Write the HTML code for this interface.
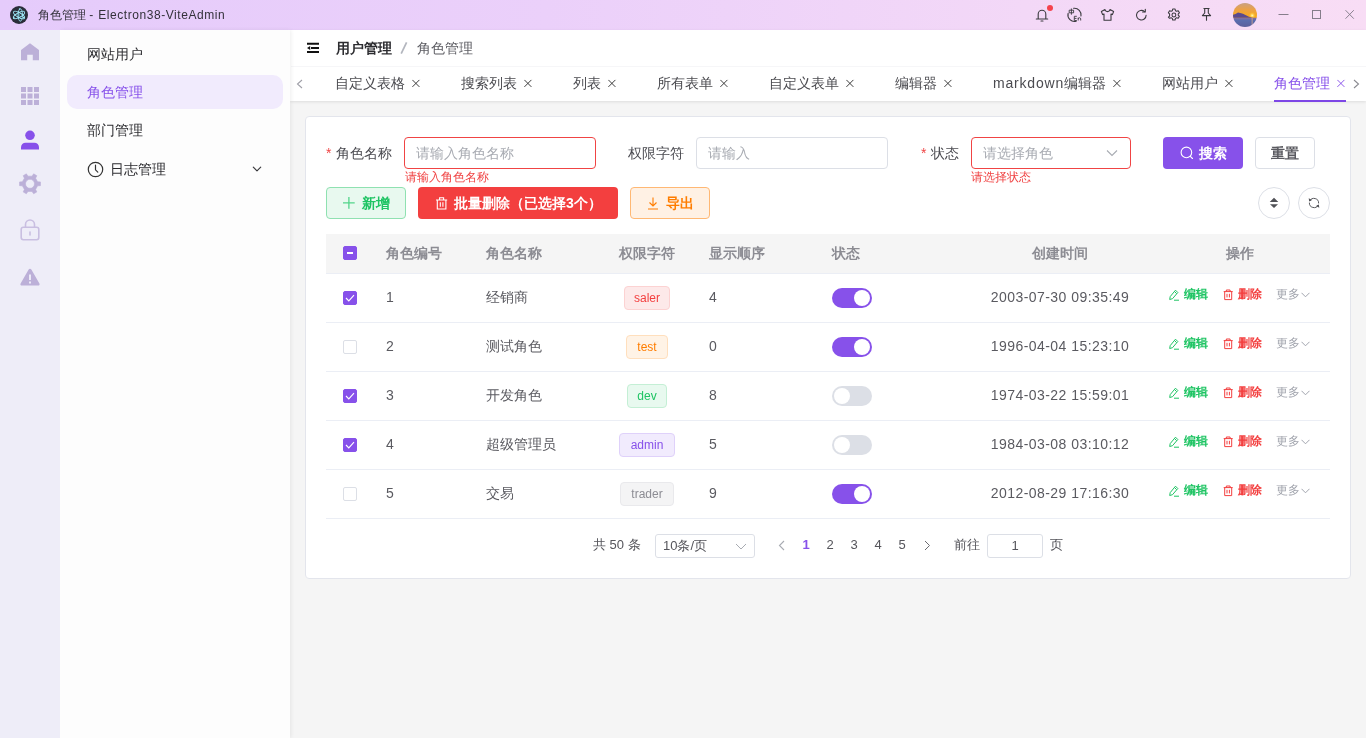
<!DOCTYPE html>
<html lang="zh">
<head>
<meta charset="utf-8">
<title>角色管理 - Electron38-ViteAdmin</title>
<style>
*{box-sizing:border-box;margin:0;padding:0}
html,body{width:1366px;height:738px;overflow:hidden}
body{font-family:"Liberation Sans",sans-serif;font-size:14px;color:#303133;background:#f5f5f5;position:relative}
#wrap{position:absolute;left:0;top:0;width:1366px;height:738px;will-change:transform}
.abs{position:absolute}
svg{display:block}
/* title bar */
#titlebar{position:absolute;left:0;top:0;width:1366px;height:30px;background:linear-gradient(90deg,#e5cbfb 0%,#ebd0fa 40%,#f3d8f7 75%,#f8ddf5 100%)}
#titlebar .title{position:absolute;left:38px;top:0;line-height:31px;font-size:12px;color:#33313a;white-space:nowrap}
#logo{position:absolute;left:10px;top:6px;width:18px;height:18px;border-radius:50%;background:#2b2e3a}
.tbi{position:absolute;top:7px;width:16px;height:16px}
/* icon rail */
#rail{position:absolute;left:0;top:30px;width:60px;height:708px;background:#eeedf8;z-index:4}
.ri{position:absolute;left:18px;width:24px;height:24px}
/* menu */
#menu{position:absolute;left:60px;top:30px;width:230px;height:708px;background:#fdfdfd;box-shadow:1px 0 4px rgba(0,0,0,.07);z-index:3}
.mi{position:absolute;left:7px;width:216px;height:34px;line-height:34px;padding-left:20px;font-size:14px;color:#2c2c30;border-radius:10px;white-space:nowrap}
.mi.on{background:#f1ebfd;color:#8751ea}
/* header */
#header{position:absolute;left:290px;top:30px;width:1076px;height:71px;background:#fff;box-shadow:0 1px 3px rgba(0,0,0,.10)}
#crumb{position:absolute;left:1px;top:0;width:1075px;height:36px;line-height:36px}
#crumb span{position:absolute;top:0;white-space:nowrap}
#tabs{position:absolute;left:1px;top:36px;width:1075px;height:35px;border-top:1px solid #f6f6f8}
.tab{position:absolute;top:-1px;height:35px;line-height:35px;font-size:14px;color:#4b4b50;white-space:nowrap}
.tab i{position:absolute;top:12px;width:10px;height:10px}
.tab.on{color:#8751ea}
/* card */
#card{position:absolute;left:305px;top:116px;width:1046px;height:463px;background:#fff;border:1px solid #e3e5ec;border-radius:4px}
.lbl{position:absolute;top:137px;height:32px;line-height:32px;font-size:14px;color:#4a4a50;white-space:nowrap}
.lbl b{color:#f04444;font-weight:normal;margin-right:5px}
.inp{position:absolute;top:137px;height:32px;line-height:30px;border:1px solid #dcdfe6;border-radius:4px;background:#fff;padding-left:11px;font-size:14px;color:#a8abb2;white-space:nowrap}
.inp.err{border-color:#f04444}
.errt{position:absolute;top:169px;line-height:16px;font-size:12px;color:#f04444;white-space:nowrap}
.btn{position:absolute;height:32px;line-height:30px;border-radius:4px;font-size:14px;font-weight:bold;white-space:nowrap;border:1px solid transparent}
.btn svg{position:absolute}
.btn span{position:absolute;top:0}
/* table */
#thead{position:absolute;left:326px;top:234px;width:1004px;height:40px;background:#f5f5f5;border-bottom:1px solid #ebeef5}
.th{position:absolute;top:234px;height:39px;line-height:39px;font-weight:bold;color:#8c8c93;font-size:14px;white-space:nowrap}
.row{position:absolute;left:326px;width:1004px;height:49px;border-bottom:1px solid #ebeef5}
.row>*{position:absolute}
.c{top:0;line-height:46px;font-size:14px;color:#5a5a60;white-space:nowrap}
.cb{left:17px;top:17px;width:14px;height:14px;border:1px solid #dcdfe6;border-radius:2px;background:#fff}
.cb.on{background:#8751ea;border-color:#8751ea}
.tag{top:12px;height:24px;line-height:22px;border:1px solid;border-radius:4px;font-size:12px;text-align:center;white-space:nowrap}
.sw{left:506px;top:14px;width:40px;height:20px;border-radius:10px;background:#dcdfe6}
.sw::after{content:"";position:absolute;left:2px;top:2px;width:16px;height:16px;border-radius:50%;background:#fff}
.sw.on{background:#8751ea}
.sw.on::after{left:22px}
.op{top:0;line-height:41px;font-size:12px;white-space:nowrap;font-weight:bold}
.op svg{position:absolute}
/* pagination */
.pg{position:absolute;top:533px;height:24px;line-height:24px;font-size:13px;color:#55555b;white-space:nowrap}
</style>
</head>
<body>
<div id="wrap">
<div id="titlebar">
<div id="logo"><svg width="18" height="18" viewBox="0 0 18 18"><g fill="none" stroke="#9feaf9" stroke-width="0.900"><ellipse cx="9" cy="9" rx="6.300" ry="2.300" transform="rotate(-30 9 9)"/><ellipse cx="9" cy="9" rx="6.300" ry="2.300" transform="rotate(30 9 9)"/><ellipse cx="10.300" cy="9" rx="2.200" ry="6.200"/></g><circle cx="8.700" cy="9" r="1" fill="#6fb6c4"/><circle cx="3.800" cy="11.800" r="0.900" fill="#9feaf9"/><circle cx="13.800" cy="11.600" r="0.900" fill="#9feaf9"/><circle cx="9.600" cy="3" r="0.800" fill="#9feaf9"/></svg></div>
<div class="title">角色管理 - <span style="letter-spacing:0.560px;margin-left:1.500px">Electron38-ViteAdmin</span></div>
<svg class="tbi" style="left:1034px" viewBox="0 0 16 16"><path d="M2.300 12h11.400M4.200 12V7a3.800 3.800 0 0 1 7.600 0v5M7 14h2" fill="none" stroke="#3a3a3e" stroke-width="1.100" stroke-linecap="round" stroke-linejoin="round"/></svg>
<div class="abs" style="left:1047px;top:5px;width:6px;height:6px;border-radius:50%;background:#f5424d"></div>
<svg class="tbi" style="left:1066px;top:6px;width:17px;height:17px" viewBox="0 0 17 17"><path d="M7.600 2.300A6.600 6.600 0 0 1 15 10M10.200 15.200A6.600 6.600 0 0 1 2.100 7.300" fill="none" stroke="#3a3a3e" stroke-width="1.100" stroke-linecap="round"/><path d="M3.200 4.200h4.400v2.600H3.200zM5.400 2.500v6.200" fill="none" stroke="#3a3a3e" stroke-width="0.900"/><path d="M10.800 10.300H8.300v4.200h2.500M8.300 12.400h2.200M12.200 11.700v2.800M12.200 12.800c0-1.400 2.500-1.400 2.500 0v1.700" fill="none" stroke="#3a3a3e" stroke-width="0.900"/></svg>
<svg class="tbi" style="left:1099px" viewBox="0 0 16 16"><path d="M6 2.600L2.400 4.600l1.200 3L5 7v6.200h7V7l1.400.6 1.200-3L11 2.600C10.600 4 9.700 4.600 8.500 4.600S6.400 4 6 2.600z" fill="none" stroke="#3a3a3e" stroke-width="1.100" stroke-linejoin="round"/></svg>
<svg class="tbi" style="left:1133px" viewBox="0 0 16 16"><path d="M13.100 8.200a4.800 4.800 0 1 1-1.600-3.600" fill="none" stroke="#3a3a3e" stroke-width="1.100" stroke-linecap="round"/><path d="M12.300 2.300v2.700H9.600" fill="none" stroke="#3a3a3e" stroke-width="1.100" stroke-linecap="round" stroke-linejoin="round"/></svg>
<svg class="tbi" style="left:1166px" viewBox="0 0 16 16"><g transform="translate(7.900 8) scale(0.92) translate(-8 -8)"><path d="M6.700 1.500h2.600l.4 1.800 1.300.7 1.700-.6 1.300 2.200-1.300 1.200v1.400l1.300 1.200-1.300 2.200-1.700-.6-1.300.7-.4 1.800H6.700l-.4-1.800-1.300-.7-1.700.6L2 10.400l1.300-1.200V6.800L2 5.600l1.300-2.200 1.700.6 1.300-.7z" fill="none" stroke="#3a3a3e" stroke-width="1.150" stroke-linejoin="round"/><circle cx="8" cy="8" r="2.100" fill="none" stroke="#3a3a3e" stroke-width="1.150"/></g></svg>
<svg class="tbi" style="left:1199px;top:6px" viewBox="0 0 16 16"><path d="M4.900 2.500h5.200M5.700 2.500v4.500L3.400 9.600h8.200L9.300 7V2.500M7.500 9.600v4.700" fill="none" stroke="#3a3a3e" stroke-width="1.100" stroke-linecap="round" stroke-linejoin="round"/></svg>
<svg class="abs" id="avatar" style="left:1233px;top:3px" width="24" height="24" viewBox="0 0 24 24"><defs><clipPath id="avc"><circle cx="12" cy="12" r="12"/></clipPath><linearGradient id="sky" x1="0" y1="0" x2="0" y2="1"><stop offset="0" stop-color="#c9a184"/><stop offset="0.45" stop-color="#eca145"/><stop offset="1" stop-color="#fbab14"/></linearGradient><linearGradient id="sea" x1="0" y1="0" x2="0" y2="1"><stop offset="0" stop-color="#8a6f9c"/><stop offset="0.3" stop-color="#5a6cae"/><stop offset="1" stop-color="#5b5f9c"/></linearGradient><radialGradient id="sun" cx="0.5" cy="0.5" r="0.5"><stop offset="0" stop-color="#fff6c8"/><stop offset="0.35" stop-color="#ffd75a"/><stop offset="1" stop-color="#ffb21e" stop-opacity="0"/></radialGradient></defs><g clip-path="url(#avc)"><rect width="24" height="15" fill="url(#sky)"/><circle cx="19.200" cy="12.500" r="3.500" fill="url(#sun)"/><rect y="14.700" width="24" height="9.300" fill="url(#sea)"/><path d="M0 11.800l2.500-.8 2.500-1.400 2.200.4 2.800.8 3 1.400 3 1.600 4 .9H0z" fill="#5b4a8e"/><rect x="18.400" y="14.800" width="1.600" height="7" fill="#e8b08a" opacity="0.450"/></g></svg>
<svg class="abs" style="left:1278px;top:9px" width="12" height="12" viewBox="0 0 12 12"><path d="M0.500 5.500h10" stroke="#857d8b" stroke-width="1" fill="none"/></svg>
<svg class="abs" style="left:1311px;top:9px" width="12" height="12" viewBox="0 0 12 12"><rect x="1.500" y="1.500" width="8" height="8" stroke="#857d8b" stroke-width="1" fill="none"/></svg>
<svg class="abs" style="left:1344px;top:9px" width="12" height="12" viewBox="0 0 12 12"><path d="M1.500 1.200l8.300 8.500M9.800 1.200l-8.300 8.500" stroke="#857d8b" stroke-width="0.950" fill="none"/></svg>
</div>
<div id="rail">
<svg class="ri" style="top:10px" viewBox="0 0 24 24"><path d="M12 3.200L3 10v10.300h6.200v-5.600h5.600v5.600H21V10z" fill="#bcb0d8"/></svg>
<svg class="ri" style="top:54px" viewBox="0 0 24 24"><g fill="#bcb0d8"><rect x="3" y="3" width="5" height="5"/><rect x="9.500" y="3" width="5" height="5"/><rect x="16" y="3" width="5" height="5"/><rect x="3" y="9.500" width="5" height="5"/><rect x="9.500" y="9.500" width="5" height="5"/><rect x="16" y="9.500" width="5" height="5"/><rect x="3" y="16" width="5" height="5"/><rect x="9.500" y="16" width="5" height="5"/><rect x="16" y="16" width="5" height="5"/></g></svg>
<svg class="ri" style="top:98px" viewBox="0 0 24 24"><circle cx="12" cy="7.300" r="4.800" fill="#8751ea"/><path d="M3 21.500v-2.200c0-2.600 2-4.600 4.600-4.600h8.800c2.600 0 4.600 2 4.600 4.600v2.200z" fill="#8751ea"/></svg>
<svg class="ri" style="top:142px" viewBox="0 0 24 24"><path fill-rule="evenodd" d="M19.63 9.76 L22.44 9.96 L22.44 13.64 L19.63 13.84 L17.59 17.39 L18.81 19.92 L15.63 21.76 L14.04 19.43 L9.96 19.43 L8.37 21.76 L5.19 19.92 L6.41 17.39 L4.37 13.84 L1.56 13.64 L1.56 9.96 L4.37 9.76 L6.41 6.21 L5.19 3.68 L8.37 1.84 L9.96 4.17 L14.04 4.17 L15.63 1.84 L18.81 3.68 L17.59 6.21z M12 7.300a4.500 4.500 0 1 0 0 9 4.500 4.500 0 0 0 0-9z" fill="#bcb0d8" stroke="#bcb0d8" stroke-width="0.600" stroke-linejoin="round"/></svg>
<svg class="ri" style="top:188px" viewBox="0 0 24 24"><rect x="3.200" y="9.300" width="17.600" height="12.400" rx="2.200" fill="none" stroke="#c9bfe1" stroke-width="1.600"/><path d="M7.500 9.300V6.500a4.500 4.500 0 0 1 9 0v2.800" fill="none" stroke="#c9bfe1" stroke-width="1.600"/><path d="M12 14v3" stroke="#c9bfe1" stroke-width="1.600" stroke-linecap="round"/></svg>
<svg class="ri" style="top:235px" viewBox="-0.500 -0.700 25 25"><path fill-rule="evenodd" d="M12 3.300c.6 0 1.100.3 1.400.8l8.400 14.400c.6 1-.1 2.200-1.300 2.200h-17c-1.200 0-1.900-1.200-1.300-2.200L10.600 4.100c.3-.5.800-.8 1.400-.8zM11 9.300v5.600h2V9.300zm0 7.200v2h2v-2z" fill="#bcb0d8"/></svg>
</div>
<div id="menu">
<div class="mi" style="top:7px">网站用户</div>
<div class="mi on" style="top:45px">角色管理</div>
<div class="mi" style="top:83px">部门管理</div>
<div class="mi" style="top:122px;padding-left:43px">日志管理
<svg class="abs" style="left:20px;top:9px" width="17" height="17" viewBox="0 0 17 17"><circle cx="8.500" cy="8.500" r="7.200" fill="none" stroke="#333" stroke-width="1.200"/><path d="M8.500 4.200v4.600l2.300 2.300" fill="none" stroke="#333" stroke-width="1.200" stroke-linecap="round"/></svg>
<svg class="abs" style="left:184px;top:12px" width="12" height="10" viewBox="0 0 12 10"><path d="M2.300 3.200l3.700 3.700 3.700-3.700" fill="none" stroke="#3a3a3e" stroke-width="1.150" stroke-linecap="round" stroke-linejoin="round"/></svg>
</div>
</div>
<div id="header">
<div id="crumb">
<svg class="abs" style="left:16px;top:12px" width="13" height="12" viewBox="0 0 13 12"><path d="M0 1.800h12M4 5.900h8M0 10h12" stroke="#111" stroke-width="2" fill="none"/><path d="M3.200 3.900L0 5.900l3.200 2z" fill="#111"/></svg>
<span style="left:45px;font-weight:bold;color:#2c2c30">用户管理</span>
<svg class="abs" style="left:108px;top:11px" width="10" height="14" viewBox="0 0 10 14"><path d="M7.600 1.300L2.200 12.700" stroke="#b3b6be" stroke-width="1.700" fill="none"/></svg>
<span style="left:126px;color:#5c5c62">角色管理</span>
</div>
<div id="tabs">
<svg class="abs" style="left:5px;top:12px" width="8" height="10" viewBox="0 0 8 10"><path d="M6 1L1.500 5 6 9" fill="none" stroke="#a0a0a8" stroke-width="1.100"/></svg>
<div class="tab" style="left:44px">自定义表格<svg class="abs" style="left:77px;top:13px" width="9" height="9" viewBox="0 0 9 9"><path d="M0.400 0.900l7 7M7.400 0.900l-7 7" stroke="#333" stroke-width="0.950" fill="none"/></svg></div>
<div class="tab" style="left:170px">搜索列表<svg class="abs" style="left:63px;top:13px" width="9" height="9" viewBox="0 0 9 9"><path d="M0.400 0.900l7 7M7.400 0.900l-7 7" stroke="#333" stroke-width="0.950" fill="none"/></svg></div>
<div class="tab" style="left:282px">列表<svg class="abs" style="left:35px;top:13px" width="9" height="9" viewBox="0 0 9 9"><path d="M0.400 0.900l7 7M7.400 0.900l-7 7" stroke="#333" stroke-width="0.950" fill="none"/></svg></div>
<div class="tab" style="left:366px">所有表单<svg class="abs" style="left:63px;top:13px" width="9" height="9" viewBox="0 0 9 9"><path d="M0.400 0.900l7 7M7.400 0.900l-7 7" stroke="#333" stroke-width="0.950" fill="none"/></svg></div>
<div class="tab" style="left:478px">自定义表单<svg class="abs" style="left:77px;top:13px" width="9" height="9" viewBox="0 0 9 9"><path d="M0.400 0.900l7 7M7.400 0.900l-7 7" stroke="#333" stroke-width="0.950" fill="none"/></svg></div>
<div class="tab" style="left:604px">编辑器<svg class="abs" style="left:49px;top:13px" width="9" height="9" viewBox="0 0 9 9"><path d="M0.400 0.900l7 7M7.400 0.900l-7 7" stroke="#333" stroke-width="0.950" fill="none"/></svg></div>
<div class="tab" style="left:702px"><span style="letter-spacing:0.8px">markdown</span>编辑器<svg class="abs" style="left:120px;top:13px" width="9" height="9" viewBox="0 0 9 9"><path d="M0.400 0.900l7 7M7.400 0.900l-7 7" stroke="#333" stroke-width="0.950" fill="none"/></svg></div>
<div class="tab" style="left:871px">网站用户<svg class="abs" style="left:63px;top:13px" width="9" height="9" viewBox="0 0 9 9"><path d="M0.400 0.900l7 7M7.400 0.900l-7 7" stroke="#333" stroke-width="0.950" fill="none"/></svg></div>
<div class="tab on" style="left:983px">角色管理<svg class="abs" style="left:63px;top:13px" width="9" height="9" viewBox="0 0 9 9"><path d="M0.400 0.900l7 7M7.400 0.900l-7 7" stroke="#8751ea" stroke-width="0.950" fill="none"/></svg></div>
<div class="abs" style="left:983px;top:33px;width:72px;height:2px;background:#7d47e6;z-index:2"></div>
<svg class="abs" style="left:1061px;top:12px" width="8" height="10" viewBox="0 0 8 10"><path d="M2 1l4.500 4L2 9" fill="none" stroke="#8a8a90" stroke-width="1.100"/></svg>
</div>
</div>
<div id="card"></div>
<div class="lbl" style="left:326px"><b>*</b>角色名称</div>
<div class="inp err" style="left:404px;width:192px">请输入角色名称</div>
<div class="errt" style="left:405px">请输入角色名称</div>
<div class="lbl" style="left:628px">权限字符</div>
<div class="inp" style="left:696px;width:192px">请输入</div>
<div class="lbl" style="left:921px"><b>*</b>状态</div>
<div class="inp err" style="left:971px;width:160px">请选择角色<svg class="abs" style="left:134px;top:11px" width="12" height="8" viewBox="0 0 12 8"><path d="M1 1.500l5 5 5-5" fill="none" stroke="#a8abb2" stroke-width="1.100"/></svg></div>
<div class="errt" style="left:971px">请选择状态</div>
<div class="btn" style="left:1163px;top:137px;width:80px;background:#8751ea;color:#fff"><svg style="left:16px;top:8px" width="14" height="14" viewBox="0 0 14 14"><circle cx="6.400" cy="6.400" r="5.300" fill="none" stroke="#fff" stroke-width="1.100"/><path d="M10.300 10.300l2.200 2.200" stroke="#fff" stroke-width="1.100" stroke-linecap="round"/></svg><span style="left:35px">搜索</span></div>
<div class="btn" style="left:1255px;top:137px;width:60px;background:#fff;border-color:#dcdfe6;color:#5a5a60"><span style="left:15px">重置</span></div>

<div class="btn" style="left:326px;top:187px;width:80px;background:#e8f9ef;border-color:#8fe1b1;color:#1ec463"><svg style="left:16px;top:9px" width="12" height="12" viewBox="0 0 12 12"><path d="M5.900 0.100v11.700M0 5.950h11.700" stroke="#52d58a" stroke-width="1.300" fill="none"/></svg><span style="left:35px">新增</span></div>
<div class="btn" style="left:418px;top:187px;width:200px;background:#f33f3f;color:#fff"><svg style="left:16.500px;top:8.800px" width="12" height="13" viewBox="0 0 12 13"><path d="M0 3h11.200M3.600 3V0.800h4v2.200M1.300 3v9h8.600V3M4.300 5.300v4.400M6.900 5.300v4.400" fill="none" stroke="#fff" stroke-width="1.100"/></svg><span style="left:35px">批量删除（已选择3个）</span></div>
<div class="btn" style="left:630px;top:187px;width:80px;background:#fff1e4;border-color:#ffb874;color:#ff7d00"><svg style="left:16px;top:9px" width="12" height="13" viewBox="0 0 12 13"><path d="M6 0.500v8M2.500 5.500L6 9l3.500-3.500M1 12h10" fill="none" stroke="#ff7d00" stroke-width="1.100"/></svg><span style="left:35px">导出</span></div>
<div class="abs" style="left:1258px;top:187px;width:32px;height:32px;border-radius:50%;border:1px solid #dcdfe6;background:#fff"><svg class="abs" style="left:10px;top:8px" width="10" height="14" viewBox="0 0 10 14"><path d="M5 1.700L0.700 6.100h8.600zM5 12.100L1 8.200h8z" fill="#505156"/></svg></div>
<div class="abs" style="left:1298px;top:187px;width:32px;height:32px;border-radius:50%;border:1px solid #dcdfe6;background:#fff"><svg class="abs" style="left:9px;top:9px" width="12" height="12" viewBox="0 0 12 12"><path d="M1.830 4.060A4.600 4.600 0 0 1 10.580 6.400M10.170 7.940A4.600 4.600 0 0 1 1.420 5.600" fill="none" stroke="#505156" stroke-width="0.950"/><path d="M0.700 1.200L4 2.900 1.200 4.600zM11.300 10.800L8 9.100l2.800-1.700z" fill="#505156"/></svg></div>
<div id="thead"><div class="abs cb on" style="left:17px;top:12px"><div class="abs" style="left:3px;top:5px;width:6px;height:2px;background:#fff"></div></div></div>
<div class="th" style="left:386px">角色编号</div><div class="th" style="left:486px">角色名称</div><div class="th" style="left:597px;width:100px;text-align:center">权限字符</div><div class="th" style="left:709px">显示顺序</div><div class="th" style="left:832px">状态</div><div class="th" style="left:1010px;width:100px;text-align:center">创建时间</div><div class="th" style="left:1190px;width:100px;text-align:center">操作</div>
<div class="row" style="top:274px"><div class="cb on"><svg class="abs" style="left:1px;top:2px" width="10" height="8" viewBox="0 0 10 8"><path d="M1 4l2.800 2.800L9 1.200" fill="none" stroke="#fff" stroke-width="1.150"/></svg></div><div class="c" style="left:60px">1</div><div class="c" style="left:160px">经销商</div><div class="tag" style="left:298px;width:46px;color:#f33f3f;background:#fde9e9;border-color:#fcd2d2">saler</div><div class="c" style="left:383px">4</div><div class="sw on"></div><div class="c" style="left:644px;width:180px;text-align:center;letter-spacing:0.45px">2003-07-30 09:35:49</div><svg style="left:842px;top:15px" width="12" height="12" viewBox="0 0 12 12"><path d="M7.500 1.200l2.300 2.300-5.300 6.200-2.800.8.500-2.900zM6.500 2.500l2.200 2.200M6 11.200h5" fill="none" stroke="#1ec463" stroke-width="1"/></svg><div class="op" style="left:858px;color:#1ec463">编辑</div><svg style="left:897px;top:15px" width="11" height="12" viewBox="0 0 11 12"><path d="M0.700 2.600h9M3.300 2.600V1h3.800v1.600M1.700 2.600v8h7v-8M4 4.800v3.600M6.400 4.800v3.600" fill="none" stroke="#f33f3f" stroke-width="1"/></svg><div class="op" style="left:912px;color:#f33f3f">删除</div><div class="op" style="left:950px;color:#a1a4ad;font-weight:500">更多</div><svg style="left:975px;top:18px" width="9" height="6" viewBox="0 0 9 6"><path d="M0.500 0.800l4 4 4-4" fill="none" stroke="#a1a4ad" stroke-width="1"/></svg></div>
<div class="row" style="top:323px"><div class="cb"></div><div class="c" style="left:60px">2</div><div class="c" style="left:160px">测试角色</div><div class="tag" style="left:300px;width:42px;color:#ff7d00;background:#fff3e6;border-color:#ffdfbd">test</div><div class="c" style="left:383px">0</div><div class="sw on"></div><div class="c" style="left:644px;width:180px;text-align:center;letter-spacing:0.45px">1996-04-04 15:23:10</div><svg style="left:842px;top:15px" width="12" height="12" viewBox="0 0 12 12"><path d="M7.500 1.200l2.300 2.300-5.300 6.200-2.800.8.500-2.900zM6.500 2.500l2.200 2.200M6 11.200h5" fill="none" stroke="#1ec463" stroke-width="1"/></svg><div class="op" style="left:858px;color:#1ec463">编辑</div><svg style="left:897px;top:15px" width="11" height="12" viewBox="0 0 11 12"><path d="M0.700 2.600h9M3.300 2.600V1h3.800v1.600M1.700 2.600v8h7v-8M4 4.800v3.600M6.400 4.800v3.600" fill="none" stroke="#f33f3f" stroke-width="1"/></svg><div class="op" style="left:912px;color:#f33f3f">删除</div><div class="op" style="left:950px;color:#a1a4ad;font-weight:500">更多</div><svg style="left:975px;top:18px" width="9" height="6" viewBox="0 0 9 6"><path d="M0.500 0.800l4 4 4-4" fill="none" stroke="#a1a4ad" stroke-width="1"/></svg></div>
<div class="row" style="top:372px"><div class="cb on"><svg class="abs" style="left:1px;top:2px" width="10" height="8" viewBox="0 0 10 8"><path d="M1 4l2.800 2.800L9 1.200" fill="none" stroke="#fff" stroke-width="1.150"/></svg></div><div class="c" style="left:60px">3</div><div class="c" style="left:160px">开发角色</div><div class="tag" style="left:301px;width:40px;color:#1ec463;background:#e8f9ef;border-color:#c4efd5">dev</div><div class="c" style="left:383px">8</div><div class="sw"></div><div class="c" style="left:644px;width:180px;text-align:center;letter-spacing:0.45px">1974-03-22 15:59:01</div><svg style="left:842px;top:15px" width="12" height="12" viewBox="0 0 12 12"><path d="M7.500 1.200l2.300 2.300-5.300 6.200-2.800.8.500-2.900zM6.500 2.500l2.200 2.200M6 11.200h5" fill="none" stroke="#1ec463" stroke-width="1"/></svg><div class="op" style="left:858px;color:#1ec463">编辑</div><svg style="left:897px;top:15px" width="11" height="12" viewBox="0 0 11 12"><path d="M0.700 2.600h9M3.300 2.600V1h3.800v1.600M1.700 2.600v8h7v-8M4 4.800v3.600M6.400 4.800v3.600" fill="none" stroke="#f33f3f" stroke-width="1"/></svg><div class="op" style="left:912px;color:#f33f3f">删除</div><div class="op" style="left:950px;color:#a1a4ad;font-weight:500">更多</div><svg style="left:975px;top:18px" width="9" height="6" viewBox="0 0 9 6"><path d="M0.500 0.800l4 4 4-4" fill="none" stroke="#a1a4ad" stroke-width="1"/></svg></div>
<div class="row" style="top:421px"><div class="cb on"><svg class="abs" style="left:1px;top:2px" width="10" height="8" viewBox="0 0 10 8"><path d="M1 4l2.800 2.800L9 1.200" fill="none" stroke="#fff" stroke-width="1.150"/></svg></div><div class="c" style="left:60px">4</div><div class="c" style="left:160px">超级管理员</div><div class="tag" style="left:293px;width:56px;color:#8751ea;background:#f1ebfd;border-color:#dfd1fa">admin</div><div class="c" style="left:383px">5</div><div class="sw"></div><div class="c" style="left:644px;width:180px;text-align:center;letter-spacing:0.45px">1984-03-08 03:10:12</div><svg style="left:842px;top:15px" width="12" height="12" viewBox="0 0 12 12"><path d="M7.500 1.200l2.300 2.300-5.300 6.200-2.800.8.500-2.900zM6.500 2.500l2.200 2.200M6 11.200h5" fill="none" stroke="#1ec463" stroke-width="1"/></svg><div class="op" style="left:858px;color:#1ec463">编辑</div><svg style="left:897px;top:15px" width="11" height="12" viewBox="0 0 11 12"><path d="M0.700 2.600h9M3.300 2.600V1h3.800v1.600M1.700 2.600v8h7v-8M4 4.800v3.600M6.400 4.800v3.600" fill="none" stroke="#f33f3f" stroke-width="1"/></svg><div class="op" style="left:912px;color:#f33f3f">删除</div><div class="op" style="left:950px;color:#a1a4ad;font-weight:500">更多</div><svg style="left:975px;top:18px" width="9" height="6" viewBox="0 0 9 6"><path d="M0.500 0.800l4 4 4-4" fill="none" stroke="#a1a4ad" stroke-width="1"/></svg></div>
<div class="row" style="top:470px"><div class="cb"></div><div class="c" style="left:60px">5</div><div class="c" style="left:160px">交易</div><div class="tag" style="left:294px;width:54px;color:#8c8c93;background:#f4f4f5;border-color:#e9e9ec">trader</div><div class="c" style="left:383px">9</div><div class="sw on"></div><div class="c" style="left:644px;width:180px;text-align:center;letter-spacing:0.45px">2012-08-29 17:16:30</div><svg style="left:842px;top:15px" width="12" height="12" viewBox="0 0 12 12"><path d="M7.500 1.200l2.300 2.300-5.300 6.200-2.800.8.500-2.900zM6.500 2.500l2.200 2.200M6 11.200h5" fill="none" stroke="#1ec463" stroke-width="1"/></svg><div class="op" style="left:858px;color:#1ec463">编辑</div><svg style="left:897px;top:15px" width="11" height="12" viewBox="0 0 11 12"><path d="M0.700 2.600h9M3.300 2.600V1h3.800v1.600M1.700 2.600v8h7v-8M4 4.800v3.600M6.400 4.800v3.600" fill="none" stroke="#f33f3f" stroke-width="1"/></svg><div class="op" style="left:912px;color:#f33f3f">删除</div><div class="op" style="left:950px;color:#a1a4ad;font-weight:500">更多</div><svg style="left:975px;top:18px" width="9" height="6" viewBox="0 0 9 6"><path d="M0.500 0.800l4 4 4-4" fill="none" stroke="#a1a4ad" stroke-width="1"/></svg></div>

<div class="pg" style="left:593px">共 50 条</div>
<div class="pg" style="left:655px;top:534px;width:100px;height:24px;line-height:22px;border:1px solid #dcdfe6;border-radius:3px;padding-left:7px;background:#fff">10条/页<svg class="abs" style="left:79px;top:8px" width="12" height="8" viewBox="0 0 12 8"><path d="M1 1l5 5 5-5" fill="none" stroke="#a8abb2" stroke-width="1"/></svg></div>
<svg class="abs" style="left:778px;top:540px" width="8" height="11" viewBox="0 0 8 11"><path d="M6 1L1.500 5.500 6 10" fill="none" stroke="#a8abb2" stroke-width="1.100"/></svg>
<div class="pg" style="left:796px;width:20px;text-align:center;color:#8751ea;font-weight:bold">1</div>
<div class="pg" style="left:820px;width:20px;text-align:center">2</div>
<div class="pg" style="left:844px;width:20px;text-align:center">3</div>
<div class="pg" style="left:868px;width:20px;text-align:center">4</div>
<div class="pg" style="left:892px;width:20px;text-align:center">5</div>
<svg class="abs" style="left:923px;top:540px" width="8" height="11" viewBox="0 0 8 11"><path d="M2 1l4.500 4.500L2 10" fill="none" stroke="#6a6a70" stroke-width="1"/></svg>
<div class="pg" style="left:954px">前往</div>
<div class="pg" style="left:987px;top:534px;width:56px;height:24px;line-height:22px;border:1px solid #dcdfe6;border-radius:3px;text-align:center;background:#fff">1</div>
<div class="pg" style="left:1050px">页</div>
</div>
</body>
</html>
